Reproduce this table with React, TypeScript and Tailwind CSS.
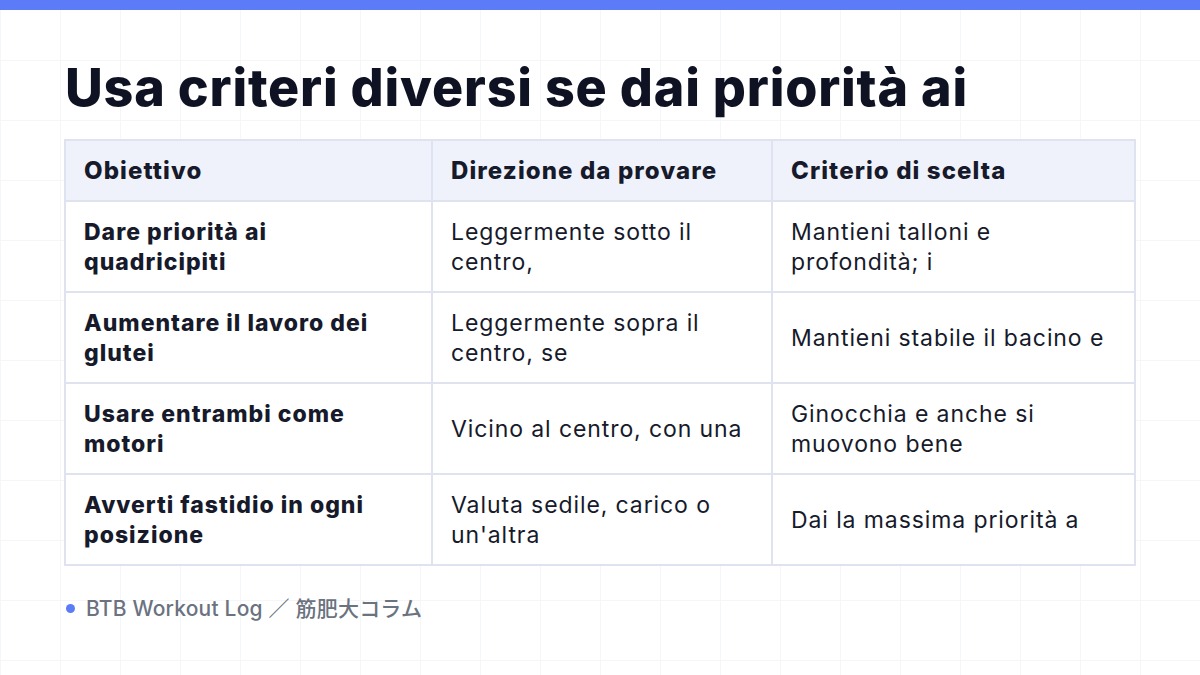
const rows = [
  { goal: 'Dare priorità ai quadricipiti', dir: 'Leggermente sotto il centro,', crit: 'Mantieni talloni e profondità; i' },
  { goal: 'Aumentare il lavoro dei glutei', dir: 'Leggermente sopra il centro, se', crit: 'Mantieni stabile il bacino e' },
  { goal: 'Usare entrambi come motori', dir: 'Vicino al centro, con una', crit: 'Ginocchia e anche si muovono bene' },
  { goal: 'Avverti fastidio in ogni posizione', dir: "Valuta sedile, carico o un'altra", crit: 'Dai la massima priorità a' },
];

export default function App() {
  return (
    <div
      className="relative h-[675px] w-[1200px] overflow-hidden bg-white text-[#111827]"
      style={{
        fontFamily: 'Inter, "Noto Sans CJK JP", sans-serif',
        backgroundImage:
          'linear-gradient(to right, #f5f6f9 1px, transparent 1px), linear-gradient(to bottom, #f5f6f9 1px, transparent 1px)',
        backgroundSize: '60px 60px',
      }}
    >
      <div className="h-[10px] bg-[#5b7cf6]" />
      <div className="px-[64px] pt-[45px]">
        <h1 className="pl-[1px] text-[52px] font-extrabold leading-[66px] tracking-[0.8px] text-[#0f1222]">
          Usa criteri diversi se dai priorità ai
        </h1>

        <table className="mt-[18px] w-[1070px] table-fixed border-collapse border-2 border-[#dfe3ef] text-[23px] leading-[30px] tracking-[0.9px] text-[#161a2b]">
          <colgroup>
            <col className="w-[367px]" />
            <col className="w-[340px]" />
            <col className="w-[363px]" />
          </colgroup>
          <thead>
            <tr className="bg-[#f0f2fb] text-[24px] tracking-[1.1px]">
              <th className="h-[61px] border-2 border-[#dfe3ef] px-[18px] text-left font-extrabold">Obiettivo</th>
              <th className="border-2 border-[#dfe3ef] px-[18px] text-left font-extrabold">Direzione da provare</th>
              <th className="border-2 border-[#dfe3ef] px-[18px] text-left font-extrabold">Criterio di scelta</th>
            </tr>
          </thead>
          <tbody>
            {rows.map((r) => (
              <tr key={r.goal} className="bg-white">
                <td className="h-[91px] border-2 border-[#dfe3ef] px-[18px] py-[14px] align-middle font-extrabold tracking-[1px]">{r.goal}</td>
                <td className="border-2 border-[#dfe3ef] px-[18px] py-[14px] align-middle">{r.dir}</td>
                <td className="border-2 border-[#dfe3ef] px-[18px] py-[14px] align-middle">{r.crit}</td>
              </tr>
            ))}
          </tbody>
        </table>

        <div className="mt-[27px] flex items-center gap-[11px] pl-[1px] text-[21px] font-medium tracking-[0.2px] text-[#6b7280]">
          <span className="ml-[1px] h-[9px] w-[9px] rounded-full bg-[#5b7cf6]" />
          <span>BTB Workout Log ／ 筋肥大コラム</span>
        </div>
      </div>
    </div>
  );
}
